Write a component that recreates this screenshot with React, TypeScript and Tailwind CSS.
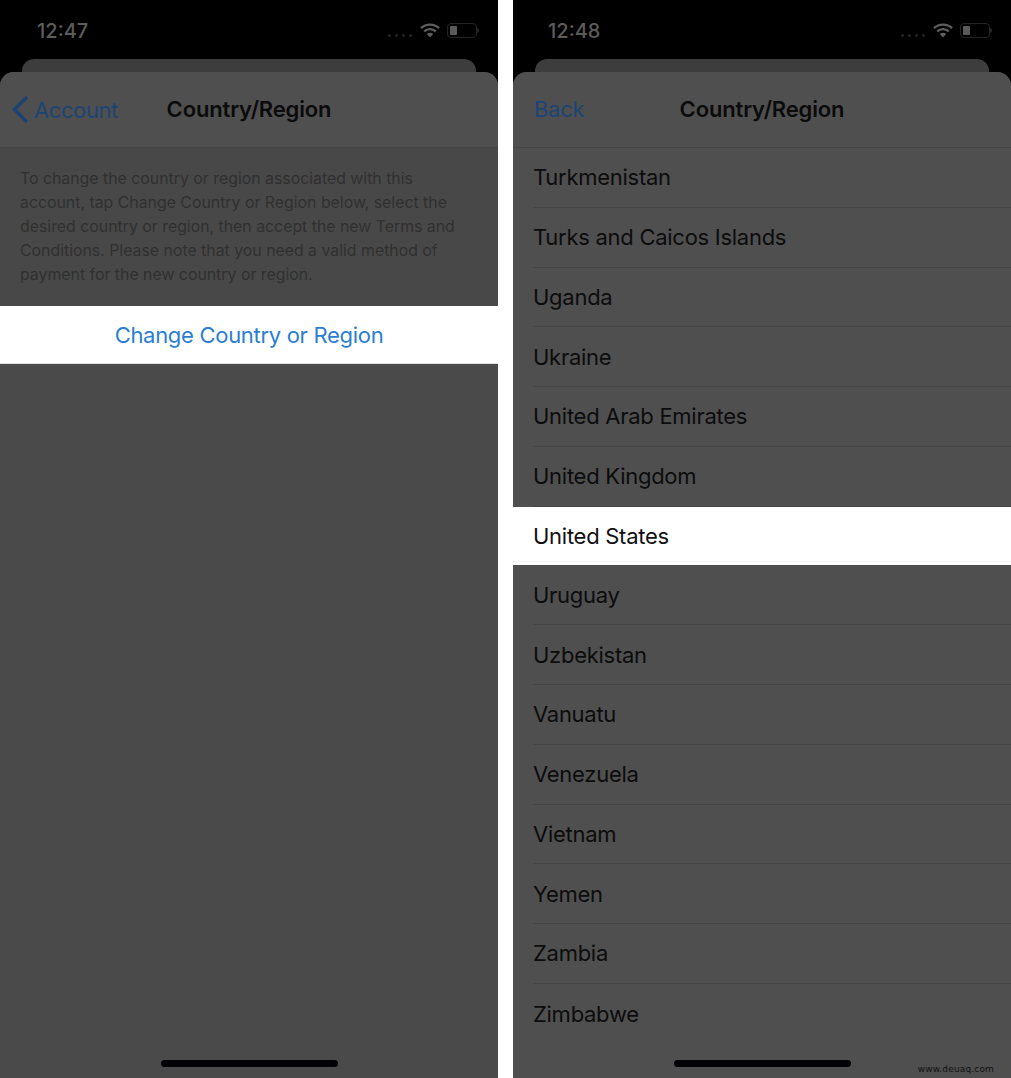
const font = { fontFamily: '"Inter", "Liberation Sans", sans-serif' };

function StatusBar({ time, left }: { time: string; left: string }) {
  return (
    <div className="flex h-[59px] shrink-0 items-start justify-between pr-[21px] pt-[20px]">
      <span className={`${left} text-[20px] font-medium leading-[22px] text-[#5c5c5c]`}>{time}</span>
      <div className="flex items-start pt-[3px]">
        <div className="mr-[8px] mt-[11px] flex gap-[4px]">
          <span className="h-[3px] w-[3px] rounded-full bg-[#242424]" />
          <span className="h-[3px] w-[3px] rounded-full bg-[#242424]" />
          <span className="h-[3px] w-[3px] rounded-full bg-[#242424]" />
          <span className="h-[3px] w-[3px] rounded-full bg-[#242424]" />
        </div>
        <svg width="20" height="15" viewBox="0 0 20 15" fill="none" className="mr-[7px]">
          <path d="M1 5.200C6 .4 14 .4 19 5.200" stroke="#5e5e5e" strokeWidth="2.400" />
          <path d="M4.200 8.400C7.500 5.300 12.500 5.300 15.800 8.400" stroke="#5e5e5e" strokeWidth="2.400" />
          <path d="M10 14.500l-3.200-3.500c1.800-1.600 4.600-1.600 6.400 0z" fill="#5e5e5e" />
        </svg>
        <div className="relative h-[15px] w-[30px] rounded-[4px] border border-[#242424] p-[2px]">
          <div className="h-full w-[7px] rounded-[1px] bg-[#5a5a5a]" />
          <span className="absolute right-[-3px] top-[4px] h-[5px] w-[2px] rounded-r-sm bg-[#242424]" />
        </div>
      </div>
    </div>
  );
}

function HomeBar() {
  return (
    <div className="absolute bottom-[11px] left-[161px] h-[7px] w-[177px] rounded-full bg-[#020204]" />
  );
}

function Sheet({ children, nav }: { children: React.ReactNode; nav: React.ReactNode }) {
  return (
    <div className="relative flex min-h-0 flex-1 flex-col">
      <div className="mx-[22px] h-[13px] shrink-0 rounded-t-[12px] bg-[#3d3d3d]" />
      <div className="flex min-h-0 flex-1 flex-col overflow-hidden rounded-t-[14px] bg-[#4a4a4a]">
        <div className="relative flex h-[76px] shrink-0 items-center justify-center border-b border-[#464646] bg-[#4f4f4f] pb-[2px]">
          {nav}
          <span className="text-[22px] font-semibold leading-[28px] tracking-[-0.15px] text-[#0b0b0c]">Country/Region</span>
        </div>
        {children}
      </div>
    </div>
  );
}

const before = ["Turkmenistan", "Turks and Caicos Islands", "Uganda", "Ukraine", "United Arab Emirates", "United Kingdom"];
const after = ["Uruguay", "Uzbekistan", "Vanuatu", "Venezuela", "Vietnam", "Yemen", "Zambia", "Zimbabwe"];

function Row({ name, last }: { name: string; last?: boolean }) {
  return (
    <div className="h-[59.75px] shrink-0 pl-[20px]">
      <div className={`flex h-full items-center text-[22px] leading-[28px] tracking-[-0.27px] text-[#0c0c0d] ${last ? "" : "border-b border-[#464646]"}`}>
        {name}
      </div>
    </div>
  );
}

export default function App() {
  return (
    <div style={font} className="flex h-[1078px] w-[1011px] justify-between overflow-hidden bg-white">
      <div className="relative flex w-[498px] flex-col bg-black">
        <StatusBar time="12:47" left="pl-[37px]" />
        <Sheet
          nav={
            <div className="absolute left-[11px] top-[23px] flex items-center gap-[4px]">
              <svg width="19" height="29" viewBox="0 0 19 29" fill="none">
                <path d="M16 2L3.500 14.500 16 27" stroke="#1b4273" strokeWidth="3.400" />
              </svg>
              <span className="text-[22px] leading-[28px] tracking-[-0.4px] text-[#1c4475]">Account</span>
            </div>
          }
        >
          <div className="h-[158px] shrink-0 bg-[#484848] pl-[20px] pr-[20px] pt-[19px] text-[15.850px] leading-[24px] text-[#303030]">
            To change the country or region associated with this account, tap Change Country or Region below, select the desired country or region, then accept the new Terms and Conditions. Please note that you need a valid method of payment for the new country or region.
          </div>
          <div className="flex h-[58px] shrink-0 items-center justify-center border-b border-[#e4e4e4] bg-white text-[22px] leading-[28px] tracking-[-0.3px] text-[#2a7ed3]">
            Change Country or Region
          </div>
        </Sheet>
        <HomeBar />
      </div>
      <div className="relative flex w-[498px] flex-col bg-black">
        <StatusBar time="12:48" left="pl-[35px]" />
        <Sheet
          nav={
            <span className="absolute left-[21px] top-[23px] text-[22px] leading-[28px] tracking-[-0.3px] text-[#1c4475]">Back</span>
          }
        >
          <div className="flex flex-1 flex-col bg-[#4f4f4f]">
            {before.map((n) => (
              <Row key={n} name={n} />
            ))}
            <div className="h-[58px] shrink-0 bg-white">
              <div className="flex h-[55px] items-center border-b border-[#f2f2f2] pl-[20px] pt-[4px] text-[22px] leading-[28px] tracking-[-0.27px] text-[#101012]">
                United States
              </div>
            </div>
            <div className="flex flex-col pt-[1px]">
              {after.map((n, i) => (
                <Row key={n} name={n} last={i === after.length - 1} />
              ))}
            </div>
          </div>
        </Sheet>
        <HomeBar />
        <span className="absolute bottom-[2px] right-[17px] text-[9px] leading-[14px] tracking-[0.15px] text-[#111]" style={{ fontFamily: '"DejaVu Sans", sans-serif' }}>
          www.deuaq.com
        </span>
      </div>
    </div>
  );
}
